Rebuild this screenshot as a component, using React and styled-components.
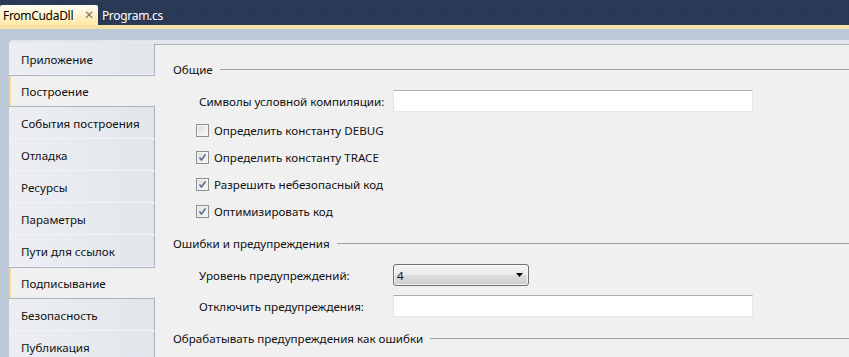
import React from 'react';
import styled, { createGlobalStyle } from 'styled-components';

const GlobalStyle = createGlobalStyle`
  html, body {
    margin: 0;
    padding: 0;
    background: #bcc7d8;
    overflow: hidden;
  }
  body {
    font-family: 'Segoe UI', 'Noto Sans', sans-serif;
    font-size: 11.6px;
    color: #111;
  }
`;

const Window = styled.div`
  width: 849px;
  height: 357px;
  display: flex;
  flex-direction: column;
  overflow: hidden;
`;

const TabBar = styled.div`
  height: 25px;
  flex: none;
  background-color: #293955;
  background-image: radial-gradient(rgba(255, 255, 255, 0.05) 1px, transparent 1px);
  background-size: 3px 3px;
  display: flex;
  align-items: flex-end;
`;

const DocTab = styled.div`
  height: 20px;
  display: flex;
  align-items: center;
  padding: 0 ${p => (p.$active ? '4px' : '5px')} 0 ${p => (p.$active ? '3px' : '4px')};
  border-radius: 2px 2px 0 0;
  background: ${p => (p.$active ? 'linear-gradient(#fffcf2, #ffe8a6)' : 'transparent')};
  color: ${p => (p.$active ? '#000' : '#fff')};
  gap: 11px;
  font-size: 12px;
  letter-spacing: -0.3px;
`;

const CloseMark = styled.span`
  color: #8a7a55;
  font-size: 12px;
  line-height: 1;
`;

const AccentStrip = styled.div`
  height: 4px;
  flex: none;
  background: #f5e2a6;
`;

const Body = styled.div`
  flex: 1;
  display: flex;
  padding: 11px 0 0 9px;
  min-height: 0;
`;

const Sidebar = styled.div`
  width: 146px;
  flex: none;
  display: flex;
  flex-direction: column;
  border-radius: 4px 0 0 0;
  overflow: hidden;
  padding-top: 2px;
  background: #e6e9ee;
  border-top: 1px solid #dfe3ea;
  position: relative;
  z-index: 1;
`;

const NavItem = styled.div`
  height: 32px;
  flex: none;
  box-sizing: border-box;
  display: flex;
  align-items: center;
  padding-left: 12px;
  margin-right: ${p => (p.$selected ? '-1px' : '0')};
  background: ${p => (p.$selected ? '#f0f0f0' : 'linear-gradient(to right, #eceef2, #e2e6ec)')};
  border-right: ${p => (p.$selected ? 'none' : '1px solid #a7afbb')};
  border-top: 1px solid ${p => (p.$selected ? '#aab3c0' : 'transparent')};
  border-bottom: 1px solid ${p => (p.$selected ? '#aab3c0' : '#f2f4f7')};
  box-shadow: ${p => (p.$selected ? 'inset 2px 0 0 #f5d98e' : 'none')};
`;

const Content = styled.div`
  flex: 1;
  display: flex;
  flex-direction: column;
  background: #f0f0f0;
  border-top: 4px solid #e2e6ed;
  box-shadow: inset 0 1px 0 #a7afbb;
  padding-left: 18px;
  position: relative;
`;

const Header = styled.div`
  height: 24px;
  flex: none;
  display: flex;
  align-items: center;
  margin-top: ${p => p.$top}px;
  &::after {
    content: '';
    flex: 1;
    height: 1px;
    background: #a0a0a0;
    margin-left: 7px;
  }
`;

const FieldRow = styled.div`
  height: 24px;
  flex: none;
  display: flex;
  align-items: center;
  padding-left: 26px;
  margin-top: ${p => p.$top}px;
`;

const FieldLabel = styled.span`
  width: 194px;
  flex: none;
`;

const TextBox = styled.div`
  width: 360px;
  height: 22px;
  box-sizing: border-box;
  background: #fff;
  border: 1px solid #e3e9ef;
  border-top-color: #abadb3;
  border-left-color: #e2e3ea;
`;

const Select = styled.div`
  width: 136px;
  height: 22px;
  box-sizing: border-box;
  border: 1px solid #707070;
  border-radius: 3px;
  background: linear-gradient(#f2f2f2 0%, #ebebeb 50%, #dddddd 51%, #cfcfcf 100%);
  display: flex;
  align-items: center;
  justify-content: space-between;
  padding: 0 5px 0 3px;
  box-shadow: inset 0 0 0 1px rgba(255, 255, 255, 0.7);
`;

const CheckRows = styled.div`
  margin-top: 4px;
  display: flex;
  flex-direction: column;
`;

const CheckRow = styled.label`
  height: 27px;
  display: flex;
  align-items: center;
  gap: 5px;
  padding-left: 23px;
`;

const Box = styled.span`
  width: 13px;
  height: 13px;
  box-sizing: border-box;
  border: 1px solid #8e8f8f;
  background: linear-gradient(135deg, #dcdcdc, #fbfbfb);
  display: flex;
  align-items: center;
  justify-content: center;
  box-shadow: inset 0 0 0 1px #f4f4f4;
`;

const Check = ({ checked }) => (
  <Box>
    {checked && (
      <svg width="9" height="9" viewBox="0 0 9 9">
        <path d="M1.5 4.5 L3.5 7 L7.5 1.5" fill="none" stroke="#566d98" strokeWidth="1.6" />
      </svg>
    )}
  </Box>
);

const Arrow = () => (
  <svg width="7" height="4" viewBox="0 0 7 4">
    <path d="M0 0 H7 L3.5 4 Z" fill="#000" />
  </svg>
);

const navItems = [
  'Приложение',
  'Построение',
  'События построения',
  'Отладка',
  'Ресурсы',
  'Параметры',
  'Пути для ссылок',
  'Подписывание',
  'Безопасность',
  'Публикация',
];
const selected = ['Построение', 'Подписывание'];

const checks = [
  { label: 'Определить константу DEBUG', checked: false },
  { label: 'Определить константу TRACE', checked: true },
  { label: 'Разрешить небезопасный код', checked: true },
  { label: 'Оптимизировать код', checked: true },
];

export default function App() {
  return (
    <Window>
      <GlobalStyle />
      <TabBar>
        <DocTab $active>
          FromCudaDll
          <CloseMark>✕</CloseMark>
        </DocTab>
        <DocTab>Program.cs</DocTab>
      </TabBar>
      <AccentStrip />
      <Body>
        <Sidebar>
          {navItems.map(item => (
            <NavItem key={item} $selected={selected.includes(item)}>
              {item}
            </NavItem>
          ))}
        </Sidebar>
        <Content>
          <Header $top={13}>Общие</Header>
          <FieldRow $top={8}>
            <FieldLabel>Символы условной компиляции:</FieldLabel>
            <TextBox />
          </FieldRow>
          <CheckRows>
            {checks.map(c => (
              <CheckRow key={c.label}>
                <Check checked={c.checked} />
                {c.label}
              </CheckRow>
            ))}
          </CheckRows>
          <Header $top={6}>Ошибки и предупреждения</Header>
          <FieldRow $top={8}>
            <FieldLabel>Уровень предупреждений:</FieldLabel>
            <Select>
              4
              <Arrow />
            </Select>
          </FieldRow>
          <FieldRow $top={7}>
            <FieldLabel>Отключить предупреждения:</FieldLabel>
            <TextBox />
          </FieldRow>
          <Header $top={8}>Обрабатывать предупреждения как ошибки</Header>
        </Content>
      </Body>
    </Window>
  );
}
